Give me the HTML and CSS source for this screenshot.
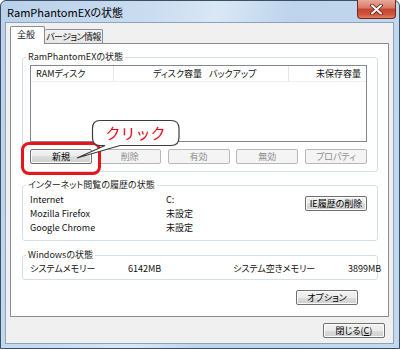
FILE: index.html
```html
<!DOCTYPE html>
<html lang="ja">
<head>
	<meta charset="UTF-8">
	<meta name="viewport" content="width=device-width, initial-scale=1.0">
	<title>RamPhantomEXの状態</title>
	<link rel="stylesheet" href="styles.css">
</head>
<body>

	<div class="window">
		<div class="titlebar">
			<span class="title">RamPhantomEXの状態</span>
			<div class="close-x">
				<svg width="13" height="11" viewBox="0 0 13 11">
					<path d="M2 1.5 L11 9.5 M11 1.5 L2 9.5" stroke="#5a1d16" stroke-width="3.6" stroke-linecap="round"/>
					<path d="M2 1.5 L11 9.5 M11 1.5 L2 9.5" stroke="#fff" stroke-width="2" stroke-linecap="round"/>
				</svg>
			</div>
		</div>

		<div class="client">
			<div class="tabs">
				<div class="tab active">全般</div>
				<div class="tab">バージョン情報</div>
			</div>

			<div class="panel">
				<!-- RAM disk list -->
				<fieldset class="group">
					<legend>RamPhantomEXの状態</legend>
					<div class="listview">
						<div class="lv-head">
							<div class="col c1">RAMディスク</div>
							<div class="col c2">ディスク容量</div>
							<div class="col c3">バックアップ</div>
							<div class="col c4">未保存容量</div>
						</div>
					</div>
					<div class="btn-row">
						<button class="btn">新規</button>
						<button class="btn" disabled>削除</button>
						<button class="btn" disabled>有効</button>
						<button class="btn" disabled>無効</button>
						<button class="btn" disabled>プロパティ</button>
					</div>
				</fieldset>

				<!-- browser history -->
				<fieldset class="group history">
					<legend>インターネット閲覧の履歴の状態</legend>
					<div class="history-body">
						<div class="history-grid">
							<div>Internet</div><div>C:</div>
							<div>Mozilla Firefox</div><div>未設定</div>
							<div>Google Chrome</div><div>未設定</div>
						</div>
						<button class="btn ie-btn">IE履歴の削除</button>
					</div>
				</fieldset>

				<!-- windows memory -->
				<fieldset class="group memory">
					<legend>Windowsの状態</legend>
					<div class="memory-row">
						<div>システムメモリー</div>
						<div>6142MB</div>
						<div>システム空きメモリー</div>
						<div>3899MB</div>
					</div>
				</fieldset>

				<div class="option-row">
					<button class="btn">オプション</button>
				</div>
			</div>

			<div class="footer">
				<button class="btn">閉じる(<u>C</u>)</button>
			</div>
		</div>
	</div>

	<!-- annotation over the dialog -->
	<div class="highlight"></div>
	<div class="callout">
		<svg width="108" height="44" viewBox="0 0 108 44">
			<path d="M26 2.5 H97 Q105 2.5 105 10.5 V19.5 Q105 27.5 97 27.5 H46 L3 40 L31 27.5 H26 Q18.5 27.5 18.5 19.5 V10.5 Q18.5 2.5 26 2.5 Z" fill="#fff" stroke="#3c3c3c" stroke-width="1.2"/>
		</svg>
		<span class="callout-text">クリック</span>
	</div>

</body>
</html>
```

FILE: styles.css
```css
body {
	margin: 0;
	width: 400px;
	height: 349px;
	overflow: hidden;
	position: relative;
	font-family: "Noto Sans CJK JP", "Noto Sans", sans-serif;
	font-size: 9px;
	font-feature-settings: "palt";
	color: #111;
}

.window {
	position: relative;
	box-sizing: border-box;
	height: 349px;
	border: 1px solid #3d4f63;
	border-radius: 6px 6px 0 0;
	padding: 0 5px 4px 4px;
	background: linear-gradient(105deg, #b9d1ea 0%, #c9dcf0 30%, #d9e7f5 45%, #bdd4ec 60%, #c4d9ee 100%);
	display: flex;
	flex-direction: column;
}

.titlebar {
	height: 21px;
	display: flex;
	align-items: center;
}

.title {
	font-size: 11px;
	padding-left: 2px;
	color: #000;
}

.close-x {
	position: absolute;
	top: -1px;
	right: 3px;
	width: 39px;
	height: 19px;
	box-sizing: border-box;
	border: 1px solid #6b2a22;
	border-top: none;
	border-radius: 0 0 4px 4px;
	background: linear-gradient(#e9a99b 0%, #d67865 45%, #c3452e 50%, #d2533a 80%, #e0815e 100%);
	display: flex;
	justify-content: center;
	align-items: center;
}

.client {
	flex: 1;
	background: #f0f0f0;
	border: 1px solid #8ea3ba;
	padding: 3px 4px 0 4px;
	display: flex;
	flex-direction: column;
}

.tabs {
	display: flex;
	align-items: flex-end;
	height: 17px;
	position: relative;
	z-index: 1;
}

.tab {
	box-sizing: border-box;
	height: 14px;
	width: 58px;
	white-space: nowrap;
	text-align: center;
	letter-spacing: -0.6px;
	border: 1px solid #898c95;
	border-bottom: none;
	border-left: none;
	border-radius: 2px 2px 0 0;
	background: linear-gradient(#f3f3f3, #e5e5e5);
	line-height: 13px;
}

.tab.active {
	height: 18px;
	margin-bottom: -1px;
	width: 35px;
	text-align: left;
	letter-spacing: 0;
	padding: 0 0 0 6px;
	border-left: 1px solid #898c95;
	background: #fff;
	line-height: 15px;
}

.panel {
	box-sizing: border-box;
	height: 274px;
	border: 1px solid #898c95;
	background: #fff;
	padding: 7px 10px 0 11px;
}

.group {
	margin: 0;
	min-width: 0;
	border: 1px solid #d5dfe5;
	border-radius: 3px;
	padding: 2px 10px 7px 7px;
}

.group legend {
	padding: 0 2px;
	margin-left: -4px;
	line-height: 12px;
	color: #222;
}

.listview {
	box-sizing: border-box;
	height: 77px;
	border: 1px solid #828790;
	background: #fff;
}

.lv-head {
	display: flex;
	height: 15px;
	line-height: 15px;
	border-bottom: 1px solid #eef0f3;
}

.col {
	box-sizing: border-box;
	padding: 0 5px;
	border-right: 1px solid #e5e5e5;
}

.c1 { width: 83px; }
.c2 { width: 93px; text-align: right; border-right: none; }
.c3 { width: 82px; padding-left: 2px; }
.c4 { flex: 1; text-align: right; border-right: none; }

.btn-row {
	display: flex;
	justify-content: space-between;
	margin-top: 7px;
}

.btn {
	box-sizing: border-box;
	width: 62px;
	height: 15px;
	padding: 0;
	font: inherit;
	line-height: 12px;
	color: #000;
	border: 1px solid #707070;
	border-radius: 2px;
	background: linear-gradient(#f2f2f2 0%, #ebebeb 50%, #dddddd 50%, #cfcfcf 100%);
	box-shadow: inset 0 0 0 1px #fbfbfb;
}

.btn:disabled {
	border-color: #b5b9bc;
	background: #f4f4f4;
	color: #8d8d8d;
	box-shadow: none;
}

.history {
	margin-top: 7px;
	padding: 2px 10px 5px 7px;
}

.history-body {
	display: flex;
	justify-content: space-between;
	align-items: flex-start;
}

.history-grid {
	display: grid;
	grid-template-columns: 136px auto;
	grid-auto-rows: 14px;
	line-height: 14px;
}

.ie-btn {
	margin-top: 3px;
}

.memory {
	margin-top: 8px;
	padding: 1px 10px 3px 7px;
}

.memory-row {
	display: grid;
	grid-template-columns: 98px 105px 115px auto;
	line-height: 14px;
}

.option-row {
	display: flex;
	justify-content: flex-end;
	margin: 10px 20px 0 0;
}

.footer {
	display: flex;
	justify-content: flex-end;
	padding: 6px 4px 5px 0;
}

.highlight {
	position: absolute;
	left: 21px;
	top: 142px;
	width: 80px;
	height: 33px;
	box-sizing: border-box;
	border: 3px solid #e8141c;
	border-radius: 8px;
}

.callout {
	position: absolute;
	left: 74px;
	top: 118px;
	width: 108px;
	height: 44px;
}

.callout svg {
	display: block;
}

.callout-text {
	position: absolute;
	left: 18px;
	top: 2px;
	width: 87px;
	height: 26px;
	line-height: 26px;
	text-align: center;
	font-size: 15px;
	color: #e60012;
	font-feature-settings: normal;
}
```
